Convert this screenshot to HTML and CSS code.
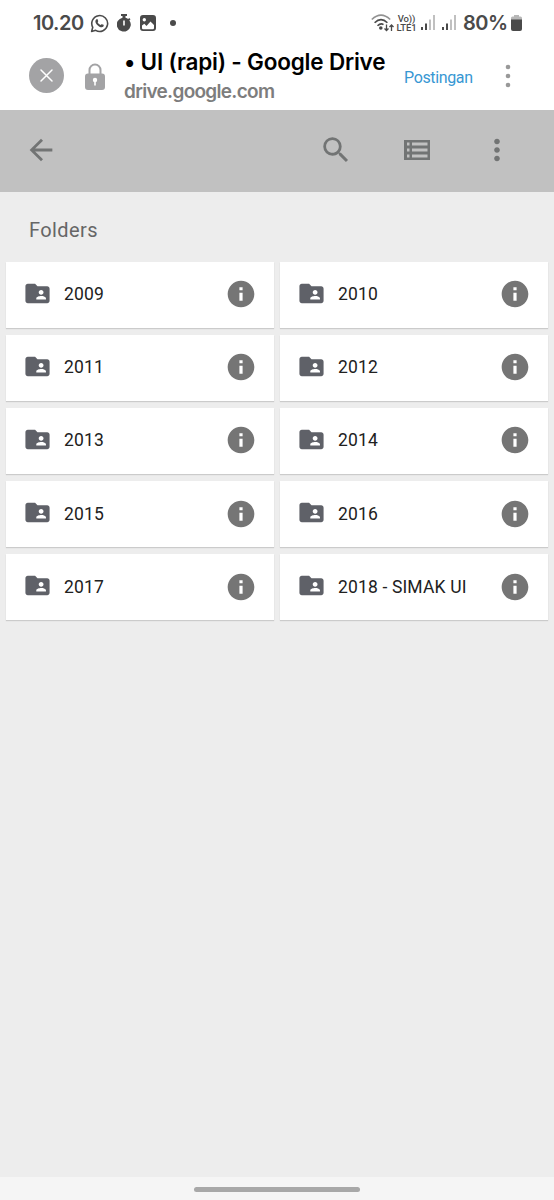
FILE: index.html
```
<!DOCTYPE html>
<html lang="id">
<head>
    <meta charset="UTF-8">
    <meta name="viewport" content="width=device-width, initial-scale=1.0">
    <title>UI (rapi) - Google Drive</title>
    <link rel="stylesheet" href="styles.css">
</head>
<body>
    <svg width="0" height="0" class="sprite">
        <symbol id="folder" viewBox="0 0 24 24">
            <path fill-rule="evenodd" d="M20 6h-8l-2-2H4c-1.1 0-2 .9-2 2v12c0 1.1.9 2 2 2h16c1.1 0 2-.9 2-2V8c0-1.1-.9-2-2-2zm-5 3c1.1 0 2 .9 2 2s-.9 2-2 2-2-.9-2-2 .9-2 2-2zm4 8h-8v-1c0-1.33 2.67-2 4-2s4 .67 4 2v1z"/>
        </symbol>
        <symbol id="info" viewBox="0 0 24 24">
            <path d="M12 2C6.48 2 2 6.48 2 12s4.48 10 10 10 10-4.480 10-10S17.520 2 12 2zm1.200 15h-2.400v-6h2.400v6zm0-7.800h-2.400V6.900h2.400v2.300z"/>
        </symbol>
        <symbol id="signal" viewBox="0 0 14 16">
            <path d="M0 12h2v3H0zM4 8.500h2V15H4z"/>
            <path opacity=".35" d="M8 4.500h2V15H8zM12 0h2v15h-2z"/>
        </symbol>
    </svg>

    <div class="status-bar">
        <span class="time">10.20</span>
        <svg class="whatsapp" viewBox="0 0 24 24"><path d="M2 22l1.500-5.200A10 10 0 1 1 7.200 20.600Z" fill="none" stroke="#4a4a4a" stroke-width="2" stroke-linejoin="round"/><path d="M8.300 6.700c.5-.4 1.100-.3 1.300.2l.8 1.900c.2.500-.8 1.300-.7 1.600.8 1.700 2.100 2.800 3.800 3.500.4.200 1.100-1.300 1.600-1.100l2 .9c.5.3.3 1.800-.5 2.400-1.700 1.300-4.200.3-6.300-1.400-2.100-1.700-3.800-4-3.500-6 .1-.8.700-1.400 1.500-2z"/></svg>
        <svg class="timer" viewBox="0 0 14 18"><path fill-rule="evenodd" d="M4 0h6v2H8.500v1.700c1 .1 2 .6 2.700 1.200l1-1 1.300 1.300-1.100 1.200A7 7 0 1 1 5.500 3.700V2H4zM6.200 6.500v5h1.600v-5z"/></svg>
        <svg class="photo" viewBox="0 0 16 16"><path fill-rule="evenodd" d="M3 0h10a3 3 0 0 1 3 3v10a3 3 0 0 1-3 3H3a3 3 0 0 1-3-3V3a3 3 0 0 1 3-3zM4.300 3a1.700 1.700 0 1 0 0 3.400 1.700 1.700 0 0 0 0-3.400zM2 10.500V13q0 1.200 1.200 1.200h9.600q1.200 0 1.200-1.200v-3l-3.500-3.600L6.500 11 4.300 8.800z"/></svg>
        <span class="dot"></span>
        <svg class="wifi" viewBox="0 0 23 18">
            <g fill="none" stroke="#4a4a4a" stroke-width="1.600">
                <path d="M.8 5.500Q10 -3.200 19.200 5.500" opacity=".6"/>
                <path d="M3.600 8.800Q10 2.500 16.400 8.800M6.500 11.800Q9.800 8.600 12.500 10.600"/>
                <path d="M15.500 10.500v6M13.500 14.500l2 2 2-2M20.500 17v-6M18.500 13l2-2 2 2" stroke-width="1.300"/>
            </g>
            <circle cx="9.800" cy="14" r="1.800"/>
        </svg>
        <span class="volte"><span>Vo))</span><span>LTE1</span></span>
        <svg class="signal"><use href="#signal"/></svg>
        <svg class="signal"><use href="#signal"/></svg>
        <span class="percent">80%</span>
        <svg class="battery" viewBox="0 0 11 16"><path opacity=".4" d="M3 0h5v1.500h1.500Q11 1.500 11 3v3H0V3q0-1.500 1.500-1.500H3z"/><path d="M0 4.500h11V14q0 2-2 2H2q-2 0-2-2z"/></svg>
    </div>

    <header class="browser-bar">
        <svg class="close" viewBox="0 0 35 35"><circle cx="17.500" cy="17.500" r="17.500" fill="#a3a3a5"/><path d="M12 12l11 11M23 12L12 23" stroke="#fff" stroke-width="1.500" stroke-linecap="round"/></svg>
        <svg class="lock" viewBox="0 0 20 27"><path d="M4.500 12V7a5.500 5.500 0 0 1 11 0v5" fill="none" stroke="#a3a3a5" stroke-width="2"/><rect y="10.500" width="20" height="16.500" rx="3" fill="#a3a3a5"/><circle cx="10" cy="17" r="2.200" fill="#fff"/><path d="M9.200 17h1.600v5.500H9.200z" fill="#fff"/></svg>
        <div class="page-info">
            <div class="page-title">• UI (rapi) - Google Drive</div>
            <div class="page-url">drive.google.com</div>
        </div>
        <span class="post-link">Postingan</span>
        <svg class="more" viewBox="0 0 6 24"><circle cx="3" cy="3" r="2.300"/><circle cx="3" cy="12" r="2.300"/><circle cx="3" cy="21" r="2.300"/></svg>
    </header>

    <nav class="toolbar">
        <svg class="back" viewBox="0 0 24 24"><path d="M20 11H7.830l5.590-5.590L12 4l-8 8 8 8 1.410-1.410L7.830 13H20v-2z"/></svg>
        <svg viewBox="0 0 24 24"><path d="M15.500 14h-.79l-.28-.27A6.471 6.471 0 0 0 16 9.500 6.500 6.500 0 1 0 9.500 16c1.610 0 3.090-.59 4.230-1.570l.27.28v.79l5 4.990L20.490 19l-4.990-5zm-6 0C7.010 14 5 11.990 5 9.500S7.010 5 9.500 5 14 7.010 14 9.500 11.990 14 9.500 14z"/></svg>
        <svg class="list" viewBox="0 0 26 20"><path fill-rule="evenodd" d="M0 0h26v20H0zM3 2.500v3h2.500v-3zM8 2.500v3h15.500v-3zM3 8.500v3h2.500v-3zM8 8.500v3h15.500v-3zM3 14.500v3h2.500v-3zM8 14.500v3h15.500v-3z"/></svg>
        <svg viewBox="0 0 24 24"><path d="M12 8c1.100 0 2-.9 2-2s-.9-2-2-2-2 .9-2 2 .9 2 2 2zm0 2c-1.100 0-2 .9-2 2s.9 2 2 2 2-.9 2-2-.9-2-2-2zm0 6c-1.100 0-2 .9-2 2s.9 2 2 2 2-.9 2-2-.9-2-2-2z"/></svg>
    </nav>

    <main>
        <h2>Folders</h2>
        <div class="folders">
            <div class="folder-card"><svg class="folder"><use href="#folder"/></svg><span>2009</span><svg class="info"><use href="#info"/></svg></div>
            <div class="folder-card"><svg class="folder"><use href="#folder"/></svg><span>2010</span><svg class="info"><use href="#info"/></svg></div>
            <div class="folder-card"><svg class="folder"><use href="#folder"/></svg><span>2011</span><svg class="info"><use href="#info"/></svg></div>
            <div class="folder-card"><svg class="folder"><use href="#folder"/></svg><span>2012</span><svg class="info"><use href="#info"/></svg></div>
            <div class="folder-card"><svg class="folder"><use href="#folder"/></svg><span>2013</span><svg class="info"><use href="#info"/></svg></div>
            <div class="folder-card"><svg class="folder"><use href="#folder"/></svg><span>2014</span><svg class="info"><use href="#info"/></svg></div>
            <div class="folder-card"><svg class="folder"><use href="#folder"/></svg><span>2015</span><svg class="info"><use href="#info"/></svg></div>
            <div class="folder-card"><svg class="folder"><use href="#folder"/></svg><span>2016</span><svg class="info"><use href="#info"/></svg></div>
            <div class="folder-card"><svg class="folder"><use href="#folder"/></svg><span>2017</span><svg class="info"><use href="#info"/></svg></div>
            <div class="folder-card"><svg class="folder"><use href="#folder"/></svg><span>2018 - SIMAK UI</span><svg class="info"><use href="#info"/></svg></div>
        </div>
    </main>

    <footer class="gesture-bar"><span></span></footer>
</body>
</html>
```

FILE: styles.css
```
* {
    box-sizing: border-box;
}

body {
    margin: 0;
    height: 1200px;
    display: flex;
    flex-direction: column;
    overflow: hidden;
    font-family: Roboto, sans-serif;
    background-color: #ededed;
}

svg {
    display: block;
    flex: none;
}

.sprite {
    display: none;
}

/* status bar */
.status-bar {
    display: flex;
    align-items: center;
    height: 46px;
    padding-left: 33px;
    background-color: #fff;
    color: #4a4a4a;
    fill: #4a4a4a;
    white-space: nowrap;
}

.time,
.percent {
    font-family: Inter, sans-serif;
    font-size: 20px;
    font-weight: 600;
    line-height: 46px;
    letter-spacing: -0.5px;
}

.time {
    width: 57px;
}

.whatsapp {
    width: 19px;
    height: 19px;
}

.timer {
    width: 14px;
    height: 18px;
    margin-left: 8px;
}

.photo {
    width: 16px;
    height: 16px;
    margin-left: 9px;
}

.dot {
    width: 6px;
    height: 6px;
    margin-left: 14px;
    border-radius: 50%;
    background-color: #4a4a4a;
}

.wifi {
    width: 23px;
    height: 18px;
    margin-left: 195px;
}

.volte {
    display: flex;
    flex-direction: column;
    align-items: center;
    width: 21px;
    margin-left: 2px;
    font-size: 9.5px;
    font-weight: 500;
    line-height: 9px;
    letter-spacing: -0.1px;
}

.signal {
    width: 14px;
    height: 16px;
    margin-left: 4px;
}

.signal + .signal {
    margin-left: 7px;
}

.percent {
    width: 47px;
    margin-left: 7px;
}

.battery {
    width: 11px;
    height: 16px;
    margin-left: 1px;
}

/* in-app browser header */
.browser-bar {
    display: flex;
    align-items: center;
    height: 64px;
    padding: 0 0 5px 29px;
    background-color: #fff;
    white-space: nowrap;
}

.close {
    width: 35px;
    height: 35px;
}

.lock {
    width: 20px;
    height: 27px;
    margin: 2px 0 0 21px;
}

.page-info {
    width: 280px;
    margin: 3px 0 0 19px;
    font-family: Inter, sans-serif;
}

.page-title {
    font-size: 22.5px;
    font-weight: 600;
    line-height: 30px;
    letter-spacing: -0.2px;
    color: #000;
}

.page-url {
    font-size: 19px;
    font-weight: 600;
    line-height: 30px;
    letter-spacing: -0.7px;
    color: #7d7d7d;
}

.post-link {
    width: 101px;
    padding-top: 4px;
    font-size: 16px;
    letter-spacing: -0.35px;
    color: #3797d3;
}

.more {
    width: 6px;
    height: 24px;
    margin-top: 1px;
    fill: #999;
}

/* drive toolbar */
.toolbar {
    display: flex;
    align-items: center;
    height: 82px;
    padding: 0 40px 2px 24px;
    background-color: #c1c1c1;
    fill: #727474;
}

.toolbar svg {
    width: 34px;
    height: 34px;
}

.toolbar .back {
    margin-right: auto;
}

.toolbar .list {
    width: 26px;
    height: 20px;
    margin: 0 50px 0 51px;
}

main {
    flex: 1;
}

h2 {
    margin: 0;
    padding-left: 29px;
    height: 69.6px;
    font-size: 20px;
    font-weight: 400;
    line-height: 76px;
    letter-spacing: 0.4px;
    color: #666;
}

.folders {
    display: grid;
    grid-template-columns: 268px 268px;
    gap: 7.2px 6px;
    padding-left: 6px;
}

.folder-card {
    display: flex;
    align-items: center;
    height: 66px;
    padding: 0 17px 1px;
    background-color: #fff;
    box-shadow: 0 1px 1px rgba(0, 0, 0, 0.14);
    font-size: 17.5px;
    letter-spacing: 0.15px;
    color: #212121;
}

.folder-card span {
    margin: 0 auto 0 12px;
}

.folder {
    width: 29px;
    height: 29px;
    margin-top: -2px;
    fill: #5f6168;
}

.info {
    width: 32px;
    height: 32px;
    fill: #757575;
}

.gesture-bar {
    display: flex;
    justify-content: center;
    height: 23px;
    padding-top: 10px;
    background-color: #f5f5f5;
}

.gesture-bar span {
    width: 166px;
    height: 5px;
    border-radius: 3px;
    background-color: #a8a8a8;
}
```
